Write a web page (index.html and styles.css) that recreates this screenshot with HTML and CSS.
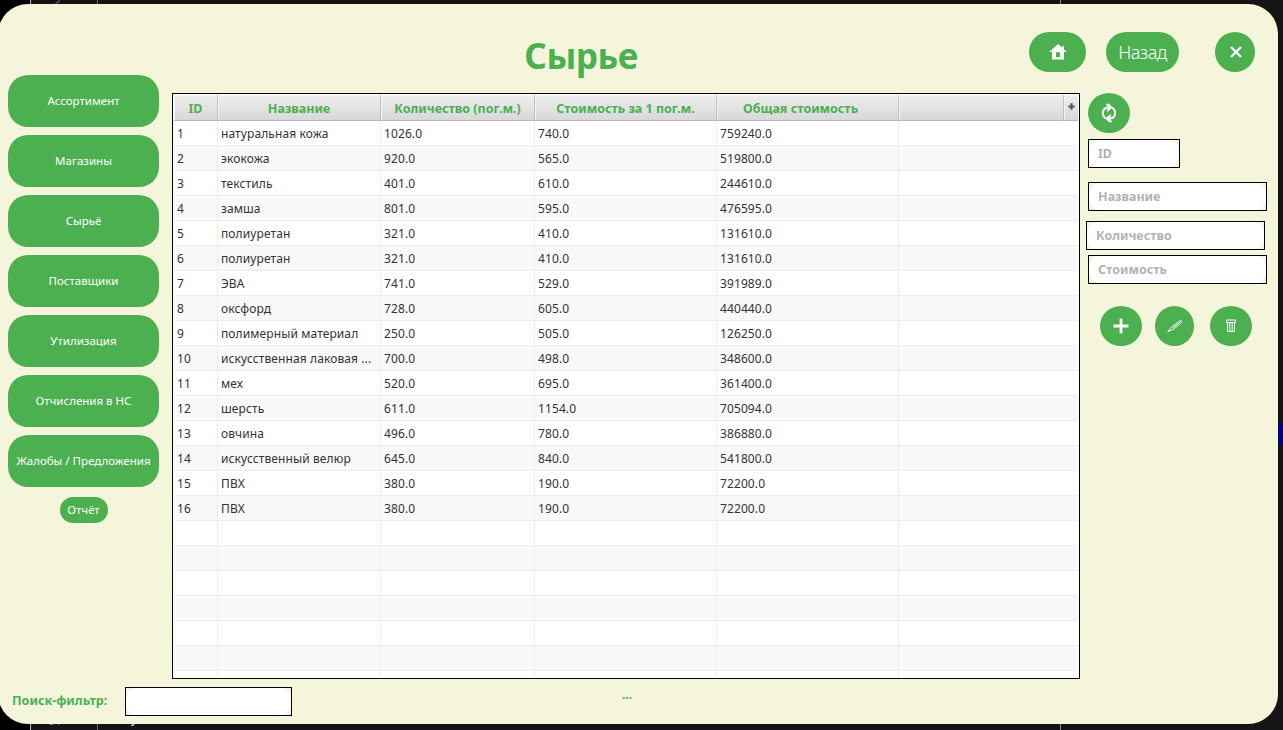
FILE: index.html
```html
<!DOCTYPE html>
<html lang="ru">
<head>
<meta charset="utf-8">
<title>Сырье</title>
<link rel="stylesheet" href="styles.css">
</head>
<body>
<div class="desktop">
  <div class="backdrop">
    <span class="rule rule-a"></span>
    <span class="rule rule-b"></span>
    <span class="rule rule-c"></span>
    <span class="selection"></span>
    <svg class="scrap" width="6" height="4" viewBox="0 0 6 4"><path d="M4.5 0 Q4.5 3 0.5 3.4" stroke="#7a8290" fill="none"/></svg>
    <span class="code code-num">57</span>
    <span class="code code-word">у</span>
  </div>

  <div class="window">
    <header class="topbar">
      <h1 class="title">Сырье</h1>
      <div class="actions">
        <button class="btn home" aria-label="home">
          <svg width="18" height="16" viewBox="0 0 18 16"><path fill="#fff" fill-rule="evenodd" d="M9 0 L13 3.6 V2 H15 V5.4 L17.8 8 H15 V15.4 H3 V8 H0.2 Z M7 8.2 V13 H11 V8.2 Z"/></svg>
        </button>
        <button class="btn back">Назад</button>
        <button class="btn close" aria-label="close">
          <svg width="12" height="12" viewBox="0 0 12 12"><path d="M1 1 L11 11 M11 1 L1 11" stroke="#fff" stroke-width="2.3" fill="none"/></svg>
        </button>
      </div>
    </header>

    <div class="body">
      <nav class="sidebar">
        <button class="btn nav">Ассортимент</button>
        <button class="btn nav">Магазины</button>
        <button class="btn nav">Сырьё</button>
        <button class="btn nav">Поставщики</button>
        <button class="btn nav">Утилизация</button>
        <button class="btn nav">Отчисления в НС</button>
        <button class="btn nav">Жалобы / Предложения</button>
        <button class="btn report">Отчёт</button>
      </nav>

      <main class="table-box">
        <table class="grid">
          <colgroup><col class="c1"><col class="c2"><col class="c3"><col class="c4"><col class="c5"><col class="c6"><col class="c7"></colgroup>
          <thead>
            <tr><th>ID</th><th>Название</th><th>Количество (пог.м.)</th><th>Стоимость за 1 пог.м.</th><th class="total">Общая стоимость</th><th></th><th class="corner"><svg width="7" height="7" viewBox="0 0 7 7"><path d="M3.5 0.3 V6.7 M0.3 3.5 H6.7" stroke="#555" stroke-width="2.2"/></svg></th></tr>
          </thead>
          <tbody>
            <tr><td>1</td><td>натуральная кожа</td><td>1026.0</td><td>740.0</td><td>759240.0</td><td colspan="2"></td></tr>
            <tr><td>2</td><td>экокожа</td><td>920.0</td><td>565.0</td><td>519800.0</td><td colspan="2"></td></tr>
            <tr><td>3</td><td>текстиль</td><td>401.0</td><td>610.0</td><td>244610.0</td><td colspan="2"></td></tr>
            <tr><td>4</td><td>замша</td><td>801.0</td><td>595.0</td><td>476595.0</td><td colspan="2"></td></tr>
            <tr><td>5</td><td>полиуретан</td><td>321.0</td><td>410.0</td><td>131610.0</td><td colspan="2"></td></tr>
            <tr><td>6</td><td>полиуретан</td><td>321.0</td><td>410.0</td><td>131610.0</td><td colspan="2"></td></tr>
            <tr><td>7</td><td>ЭВА</td><td>741.0</td><td>529.0</td><td>391989.0</td><td colspan="2"></td></tr>
            <tr><td>8</td><td>оксфорд</td><td>728.0</td><td>605.0</td><td>440440.0</td><td colspan="2"></td></tr>
            <tr><td>9</td><td>полимерный материал</td><td>250.0</td><td>505.0</td><td>126250.0</td><td colspan="2"></td></tr>
            <tr><td>10</td><td>искусственная лаковая ...</td><td>700.0</td><td>498.0</td><td>348600.0</td><td colspan="2"></td></tr>
            <tr><td>11</td><td>мех</td><td>520.0</td><td>695.0</td><td>361400.0</td><td colspan="2"></td></tr>
            <tr><td>12</td><td>шерсть</td><td>611.0</td><td>1154.0</td><td>705094.0</td><td colspan="2"></td></tr>
            <tr><td>13</td><td>овчина</td><td>496.0</td><td>780.0</td><td>386880.0</td><td colspan="2"></td></tr>
            <tr><td>14</td><td>искусственный велюр</td><td>645.0</td><td>840.0</td><td>541800.0</td><td colspan="2"></td></tr>
            <tr><td>15</td><td>ПВХ</td><td>380.0</td><td>190.0</td><td>72200.0</td><td colspan="2"></td></tr>
            <tr><td>16</td><td>ПВХ</td><td>380.0</td><td>190.0</td><td>72200.0</td><td colspan="2"></td></tr>
            <tr><td></td><td></td><td></td><td></td><td></td><td colspan="2"></td></tr>
            <tr><td></td><td></td><td></td><td></td><td></td><td colspan="2"></td></tr>
            <tr><td></td><td></td><td></td><td></td><td></td><td colspan="2"></td></tr>
            <tr><td></td><td></td><td></td><td></td><td></td><td colspan="2"></td></tr>
            <tr><td></td><td></td><td></td><td></td><td></td><td colspan="2"></td></tr>
            <tr><td></td><td></td><td></td><td></td><td></td><td colspan="2"></td></tr>
            <tr><td></td><td></td><td></td><td></td><td></td><td colspan="2"></td></tr>
          </tbody>
        </table>
      </main>

      <aside class="panel">
        <button class="btn round" aria-label="refresh">
          <svg width="16" height="20" viewBox="0 0 16 20"><g fill="none" stroke="#fff" stroke-width="2"><path d="M4.8 15.6 C0.4 12 0.8 5 7 4.4"/><path d="M11.2 4.4 C15.6 8 15.2 15 9 15.6"/></g><path fill="#fff" d="M4.6 0.8 H8 L11.6 4.6 L7 8.6 H5.6 L7.2 4.6 Z M11.4 19.2 H8 L4.4 15.4 L9 11.4 H10.4 L8.8 15.4 Z"/></svg>
        </button>
        <div class="field field-id"><input class="input" placeholder="ID"></div>
        <div class="field field-name"><input class="input" placeholder="Название"></div>
        <div class="field field-qty"><input class="input" placeholder="Количество"></div>
        <div class="field field-cost"><input class="input" placeholder="Стоимость"></div>
        <div class="tools">
          <button class="btn round" aria-label="add">
            <svg width="16" height="16" viewBox="0 0 16 16"><path d="M8 0.5 V15.5 M0.5 8 H15.5" stroke="#fff" stroke-width="2.8"/></svg>
          </button>
          <button class="btn round edit" aria-label="edit">
            <svg width="18" height="15" viewBox="0 0 18 15"><g fill="none" stroke="#fff" stroke-width=".9" stroke-linejoin="round"><path d="M2 12.4 L5.2 8.4 L12.6 2.6 Q15.4 1 15.8 2 Q15.8 3.4 13.6 5.4 L6.8 10.6 Z"/><path d="M6.4 9 L14 3.2"/></g><path fill="#fff" d="M1.2 13 L3.6 10.2 L5.2 11.6 Z"/></svg>
          </button>
          <button class="btn round" aria-label="delete">
            <svg width="10" height="14" viewBox="0 0 10 14"><g fill="none" stroke="#fff"><path d="M0.5 1 H9.5 V3.5 H0.5 Z M1.5 3.5 V12.5 H8.5 V3.5"/><path stroke-opacity=".65" d="M3.5 4 V12 M5 4 V12 M6.5 4 V12"/></g></svg>
          </button>
        </div>
      </aside>
    </div>

    <footer class="footer">
      <label class="filter-label" for="filter">Поиск-фильтр:</label>
      <div class="field field-filter"><input class="input" id="filter"></div>
      <span class="status">...</span>
    </footer>
  </div>
</div>
</body>
</html>
```

FILE: styles.css
```css
* { box-sizing: border-box; }

body {
  margin: 0;
  font-family: "Noto Sans", "Open Sans", sans-serif;
  font-size: 12px;
  color: #333;
}

.desktop {
  position: relative;
  width: 1283px;
  height: 730px;
  overflow: hidden;
  background: linear-gradient(90deg, #000 30px, #141414 30px);
  display: flow-root;
}

/* Editor window showing behind the application */
.backdrop { position: absolute; inset: 0; }
.rule { position: absolute; top: 0; width: 1px; height: 730px; background: #666; }
.rule-a { left: 30px; background: #bbb; }
.rule-b { left: 97px; }
.rule-c { left: 1060px; background: #888; }
.selection { position: absolute; left: 1278px; top: 423px; width: 5px; height: 22px; background: #000080; }
.scrap { position: absolute; left: 55px; top: 0; }
.code { position: absolute; font: 14px/16px "Liberation Mono", monospace; color: #7a8290; }
.code-num { left: 47px; top: 713px; }
.code-word { left: 130px; top: 711px; color: #e8e8e8; }

.window {
  position: relative;
  width: 1280px;
  height: 720px;
  margin: 4px 0 0 -2px;
  border-radius: 30px;
  background: #f5f5dc;
  display: flex;
  flex-direction: column;
}

.btn {
  display: flex;
  align-items: center;
  justify-content: center;
  padding: 0;
  border: 0;
  border-radius: 20px;
  background: #4caf50;
  color: #fff;
  font: inherit;
  white-space: nowrap;
}

.topbar {
  display: flex;
  align-items: flex-start;
  height: 71px;
  padding-top: 28px;
}
.title {
  width: 520px;
  margin: 0 0 0 323px;
  text-align: center;
  font-size: 35px;
  letter-spacing: -0.5px;
  line-height: 48px;
  font-weight: 700;
  color: #4caf50;
}
.actions { display: flex; margin-left: 188px; }
.actions .btn { height: 40px; }
.home { width: 57px; }
.back { width: 73px; margin-left: 20px; font-size: 18px; font-weight: 300; letter-spacing: -0.5px; }
.close { width: 40px; margin-left: 36px; }
.close svg { margin-left: 1px; }

.body { display: flex; height: 604px; }

.sidebar {
  display: flex;
  flex-direction: column;
  align-items: center;
  gap: 8px;
  width: 151px;
  margin-left: 10px;
  font-size: 11.5px;
}
.nav { width: 151px; height: 52px; padding-bottom: 1px; }
.report { width: 48px; height: 26px; margin-top: 2px; padding-bottom: 1px; border-radius: 13px; }

.table-box {
  width: 908px;
  height: 586px;
  margin: 18px 0 0 13px;
  padding: 1px;
  border: 1px solid #000;
  background: #fff;
  overflow: hidden;
}
.grid {
  width: 904px;
  table-layout: fixed;
  border-collapse: separate;
  border-spacing: 0;
}
.c1 { width: 44px; }
.c2 { width: 163px; }
.c3 { width: 154px; }
.c4, .c5 { width: 182px; }
.c6 { width: 165px; }
.c7 { width: 14px; }
.grid th {
  height: 26px;
  padding: 2px 0 0;
  border-right: 1px solid #c0c0c0;
  border-bottom: 1px solid #bababa;
  box-shadow: inset 1px 1px 0 #f4f4f4;
  background: linear-gradient(#eeeeee, #d8d8d8);
  font-size: 12.5px;
  line-height: 17px;
  font-weight: 700;
  white-space: nowrap;
  color: #4caf50;
}
.grid .total { padding-right: 14px; }
.grid .corner { border-right: 0; padding: 0 0 2px; }
.corner svg { display: block; margin: 0 auto; }
.grid td {
  height: 25px;
  padding: 2px 0 0 3px;
  border-right: 1px solid #ededed;
  border-bottom: 1px solid #ededed;
  white-space: nowrap;
  line-height: 16px;
  letter-spacing: 0.1px;
}
.grid td:last-child { border-right: 0; }
.grid tbody tr:nth-child(even) { background: #f9f9f9; }

.panel { width: 190px; margin: 18px 0 0 8px; }
.round { width: 42px; height: 40px; border-radius: 50%; }

.field {
  width: 179px;
  height: 29px;
  border: 1px solid #000;
}
.input {
  display: block;
  width: 100%;
  height: 27px;
  padding: 0 9px;
  border: 0;
  border-radius: 11px;
  background: #fff;
  font: 700 12.5px/17px "Noto Sans", "Open Sans", sans-serif;
  color: #333;
}
.input::placeholder { color: #b2b2b2; opacity: 1; }
.field-id { width: 92px; margin-top: 6px; }
.field-name { margin-top: 14px; }
.field-qty { margin: 10px 0 0 -2px; }
.field-cost { margin-top: 5px; }

.tools { display: flex; margin: 22px 0 0 12px; }
.tools .edit { width: 39px; margin: 0 16px 0 13px; }

.footer { display: flex; height: 45px; padding: 8px 0 0 14px; }
.filter-label { width: 113px; font-size: 12.6px; line-height: 27px; font-weight: 700; color: #4caf50; }
.field-filter { width: 167px; }
.status { margin-left: 330px; line-height: 16px; font-weight: 700; color: #4caf50; }
```
